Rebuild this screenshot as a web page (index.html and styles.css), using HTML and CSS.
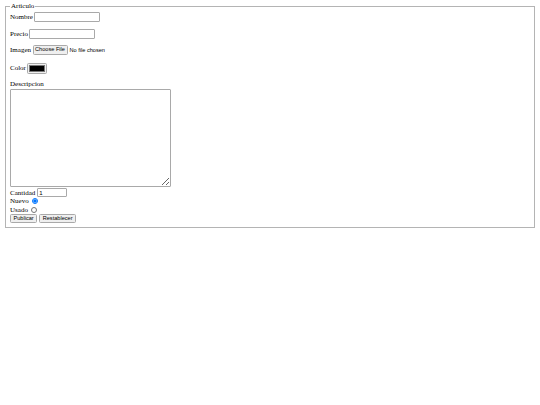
FILE: index.html
```html
<!DOCTYPE html>
<html lang="es">
<head>
<meta charset="utf-8">
<title>Articulo</title>
<link rel="stylesheet" href="styles.css">
</head>
<body>
<form class="form">
  <fieldset class="box">
    <legend class="legend">Articulo</legend>
    <div class="rows">
      <div class="row row-nombre"><label class="lbl">Nombre</label><input class="txt" type="text"></div>
      <div class="row row-precio"><label class="lbl">Precio</label><input class="txt" type="text"></div>
      <div class="row row-imagen"><label class="lbl">Imagen</label><span class="btn btn-file">Choose File</span><span class="nofile">No file chosen</span></div>
      <div class="row row-color"><label class="lbl">Color</label><span class="color"><span class="swatch"></span></span></div>
      <div class="desc-label">Descripcion</div>
      <textarea class="area"></textarea>
      <div class="row row-cantidad"><label class="lbl">Cantidad</label><input class="txt num" type="text" value="1"></div>
      <div class="row row-radio"><label class="lbl">Nuevo</label><input class="radio" type="radio" name="estado" checked></div>
      <div class="row row-radio"><label class="lbl">Usado</label><input class="radio" type="radio" name="estado"></div>
      <div class="row row-buttons"><button class="btn" type="button">Publicar</button><button class="btn" type="button">Restablecer</button></div>
    </div>
  </fieldset>
</form>
</body>
</html>
```
FILE: styles.css
```css
html, body {
  background: #ffffff;
}
body {
  margin: 1.5px 4px 4px 4px;
  font-family: "Liberation Serif", "Times New Roman", serif;
  font-size: 7px;
  color: #000000;
}
.form {
  margin: 0;
}
.box {
  margin: 0 1px;
  padding: 0 4px 4.5px 4px;
  border: 1px solid #b4b4b4;
  min-width: 0;
}
.legend {
  padding: 0 1px;
  margin-left: 0;
  line-height: 9px;
  font-size: 7px;
}
.rows {
  display: flex;
  flex-direction: column;
  align-items: flex-start;
}
.row {
  display: flex;
  align-items: center;
  gap: 1.5px;
}
.lbl {
  line-height: 8px;
}
.row-nombre { margin-top: 1.5px; height: 10px; }
.row-precio { margin-top: 6.5px; height: 10px; }
.row-imagen { margin-top: 6px; height: 10px; }
.row-color { margin-top: 8px; height: 11px; }
.desc-label { margin-top: 6.5px; line-height: 8.5px; }
.row-cantidad { margin-top: 1.5px; height: 9px; }
.row-radio { height: 8.5px; }
.row-buttons { height: 8px; gap: 2px; margin-top: 0.5px; }

.txt {
  box-sizing: border-box;
  width: 66px;
  height: 10px;
  margin: 0;
  padding: 0 1.5px;
  border: 1px solid #a9a9a9;
  border-radius: 1px;
  font-family: "Liberation Sans", Arial, sans-serif;
  font-size: 6px;
  background: #ffffff;
}
.num {
  width: 30px;
  height: 9px;
}
.btn {
  box-sizing: border-box;
  display: inline-flex;
  align-items: center;
  justify-content: center;
  height: 8.5px;
  margin: 0;
  padding: 0 2.5px;
  background: #efefef;
  border: 1px solid #a9a9a9;
  border-radius: 1.5px;
  font-family: "Liberation Sans", Arial, sans-serif;
  font-size: 5.6px;
  color: #000000;
  line-height: 1;
}
.btn-file {
  height: 10px;
  width: 35px;
  padding: 0;
}
.nofile {
  font-family: "Liberation Sans", Arial, sans-serif;
  font-size: 5.6px;
  margin-left: 0.5px;
}
.color {
  box-sizing: border-box;
  display: inline-flex;
  align-items: center;
  justify-content: center;
  width: 20px;
  height: 11px;
  background: #efefef;
  border: 1px solid #a9a9a9;
  border-radius: 1.5px;
}
.swatch {
  display: block;
  width: 16px;
  height: 7px;
  background: #000000;
  border: 0.5px solid #777777;
  box-sizing: border-box;
}
.area {
  box-sizing: border-box;
  display: block;
  width: 161px;
  height: 98px;
  margin: 0;
  padding: 1px;
  border: 1px solid #a9a9a9;
  border-radius: 1px;
  resize: both;
  background: #ffffff;
}
.radio {
  width: 6px;
  height: 6px;
  margin: 0 0 0 2px;
  accent-color: #0075ff;
}
```
